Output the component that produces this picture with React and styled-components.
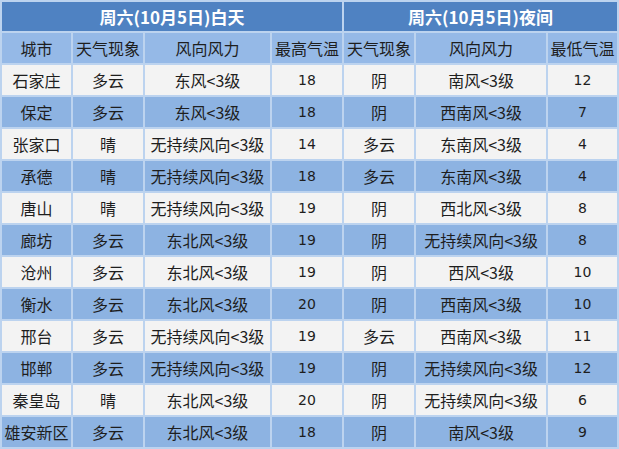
import React from 'react'
import styled, { createGlobalStyle } from 'styled-components'

const GlobalStyle = createGlobalStyle`
  html, body {
    margin: 0;
    padding: 0;
    background: #ffffff;
  }
`

const Table = styled.table`
  width: 619px;
  table-layout: fixed;
  border-collapse: separate;
  border-spacing: 2px;
  background: #bcd3ef;
  font-family: "Noto Sans CJK SC", "DejaVu Sans", sans-serif;
  color: #1e1e1e;
`

const Period = styled.th`
  height: 29px;
  padding: 0;
  background: #4f82c2;
  color: #ffffff;
  font-size: 17px;
  font-weight: bold;
  text-align: center;
`

const Head = styled.th`
  height: 30px;
  padding: 0;
  background: #95b9e7;
  font-size: 16px;
  font-weight: normal;
  text-align: center;
  white-space: nowrap;
`

const Cell = styled.td`
  height: 30px;
  padding: 0;
  background: ${p => (p.$alt ? '#8db3e2' : '#f3f3f3')};
  font-size: 16px;
  text-align: center;
  white-space: nowrap;
`

const Num = styled(Cell)`
  font-family: "DejaVu Sans", "Liberation Sans", sans-serif;
  font-size: 14px;
`

const cols = [69, 70, 125, 70, 70, 130, 69]

const rows = [
  ['石家庄', '多云', '东风<3级', '18', '阴', '南风<3级', '12'],
  ['保定', '多云', '东风<3级', '18', '阴', '西南风<3级', '7'],
  ['张家口', '晴', '无持续风向<3级', '14', '多云', '东南风<3级', '4'],
  ['承德', '晴', '无持续风向<3级', '18', '多云', '东南风<3级', '4'],
  ['唐山', '晴', '无持续风向<3级', '19', '阴', '西北风<3级', '8'],
  ['廊坊', '多云', '东北风<3级', '19', '阴', '无持续风向<3级', '8'],
  ['沧州', '多云', '东北风<3级', '19', '阴', '西风<3级', '10'],
  ['衡水', '多云', '东北风<3级', '20', '阴', '西南风<3级', '10'],
  ['邢台', '多云', '无持续风向<3级', '19', '多云', '西南风<3级', '11'],
  ['邯郸', '多云', '无持续风向<3级', '19', '阴', '无持续风向<3级', '12'],
  ['秦皇岛', '晴', '东北风<3级', '20', '阴', '无持续风向<3级', '6'],
  ['雄安新区', '多云', '东北风<3级', '18', '阴', '南风<3级', '9'],
]

export default function App() {
  return (
    <>
      <GlobalStyle />
      <Table>
        <colgroup>
          {cols.map((w, i) => <col key={i} style={{ width: w }} />)}
        </colgroup>
        <thead>
          <tr>
            <Period colSpan={4}>周六(10月5日)白天</Period>
            <Period colSpan={3}>周六(10月5日)夜间</Period>
          </tr>
          <tr>
            <Head>城市</Head>
            <Head>天气现象</Head>
            <Head>风向风力</Head>
            <Head>最高气温</Head>
            <Head>天气现象</Head>
            <Head>风向风力</Head>
            <Head>最低气温</Head>
          </tr>
        </thead>
        <tbody>
          {rows.map((r, i) => (
            <tr key={r[0]}>
              {r.map((v, j) =>
                j === 3 || j === 6
                  ? <Num key={j} $alt={i % 2 === 1}>{v}</Num>
                  : <Cell key={j} $alt={i % 2 === 1}>{v}</Cell>
              )}
            </tr>
          ))}
        </tbody>
      </Table>
    </>
  )
}
